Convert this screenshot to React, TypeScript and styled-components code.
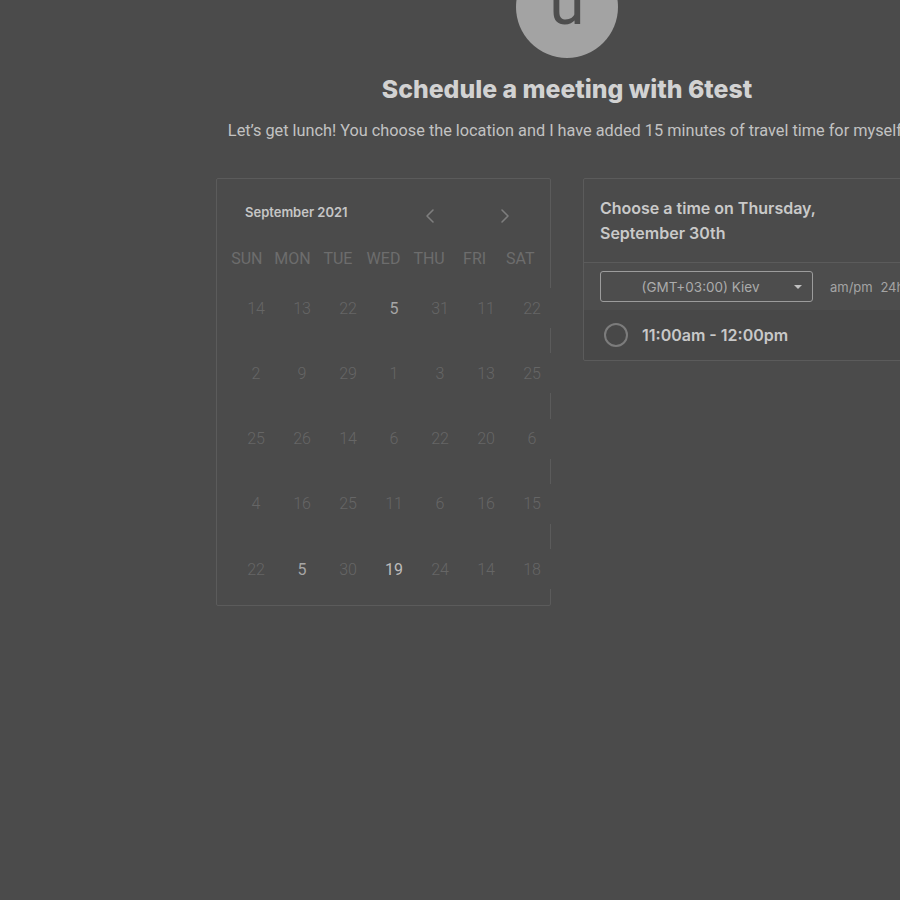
import React from "react";
import styled, { createGlobalStyle } from "styled-components";

const Global = createGlobalStyle`
  html, body { margin: 0; padding: 0; background: #4b4b4b; overflow: hidden; }
  body { font-family: Roboto, "Liberation Sans", sans-serif; }
  * { box-sizing: border-box; }
`;

const Page = styled.div`
  width: 1134px;
  display: flex;
  flex-direction: column;
  align-items: center;
`;

const Avatar = styled.div`
  width: 102px;
  height: 102px;
  margin-top: -44px;
  border-radius: 50%;
  background: #a3a3a3;
  color: #4e4e4e;
  font-family: Roboto, sans-serif;
  font-size: 64px;
  line-height: 1;
  display: flex;
  align-items: center;
  justify-content: center;
  padding-bottom: 8px;
`;

const Title = styled.h1`
  margin: 16px 0 0;
  font-family: Inter, sans-serif;
  font-weight: 800;
  font-size: 24.8px;
  line-height: 30px;
  color: #d2d2d2;
`;

const Subtitle = styled.p`
  margin: 17px 0 0;
  font-family: Roboto, sans-serif;
  font-size: 16.3px;
  line-height: 20px;
  color: #c2c2c2;
  white-space: nowrap;
`;

const Columns = styled.div`
  margin-top: 37px;
  display: flex;
  gap: 32px;
  align-items: flex-start;
`;

const CalendarCard = styled.div`
  width: 335px;
  height: 428px;
  border: 1px solid #5b5b5b;
  border-radius: 2px;
  display: flex;
  flex-direction: column;
`;

const CalHeader = styled.div`
  height: 65px;
  display: flex;
  align-items: center;
  padding: 0 33px 0 28px;
`;

const MonthLabel = styled.div`
  font-family: Inter, sans-serif;
  font-weight: 600;
  font-size: 13px;
  color: #c6c6c6;
`;

const NavGroup = styled.div`
  margin-left: auto;
  display: flex;
  gap: 51px;
  margin-top: 8px;
`;

const NavButton = styled.button`
  width: 24px;
  height: 24px;
  padding: 0;
  border: none;
  background: transparent;
  display: flex;
  align-items: center;
  justify-content: center;
  color: #7e7e7e;
`;

const DayNames = styled.div`
  margin: 5px 0 0 7px;
  width: 319px;
  display: grid;
  grid-template-columns: repeat(7, 1fr);
`;

const DayName = styled.div`
  text-align: center;
  font-family: Roboto, sans-serif;
  font-size: 16px;
  line-height: 20px;
  color: #6d6d6d;
`;

const DayGrid = styled.div`
  margin: 19px 0 0 16px;
  width: 322px;
  display: grid;
  grid-template-columns: repeat(7, 1fr);
  grid-auto-rows: 40px;
  row-gap: 25.3px;
`;

const DayCell = styled.div<{ $tone: "dim" | "mid" | "bright" }>`
  background: #4b4b4b;
  display: flex;
  align-items: center;
  justify-content: center;
  font-family: Roboto, sans-serif;
  font-weight: ${(p) => (p.$tone === "dim" ? 300 : 400)};
  font-size: 16px;
  color: ${(p) =>
    p.$tone === "dim" ? "#666666" : p.$tone === "mid" ? "#a6a6a6" : "#bcbcbc"};
`;

const TimePanel = styled.div`
  width: 335px;
  border: 1px solid #5b5b5b;
  border-radius: 2px;
`;

const PanelHeader = styled.div`
  padding: 17px 16px 16px;
  font-family: Inter, sans-serif;
  font-weight: 600;
  font-size: 16px;
  line-height: 25px;
  color: #c9c9c9;
  border-bottom: 1px solid #5b5b5b;
`;

const ZoneRow = styled.div`
  height: 47px;
  display: flex;
  align-items: center;
  padding: 0 16px;
  gap: 17px;
  background: #4d4d4d;
  overflow: hidden;
`;

const ZoneSelect = styled.div`
  flex: 0 0 213px;
  height: 31px;
  border: 1px solid #9c9c9c;
  border-radius: 3px;
  display: flex;
  align-items: center;
  padding: 0 10px 0 16px;
  font-family: Inter, sans-serif;
  font-size: 13.5px;
  color: #ababab;
`;

const ZoneText = styled.span`
  flex: 1;
  text-align: center;
  padding-right: 10px;
`;

const Caret = styled.span`
  width: 0;
  height: 0;
  border-left: 4px solid transparent;
  border-right: 4px solid transparent;
  border-top: 4px solid #c0c0c0;
`;

const FormatToggle = styled.div`
  flex: 0 0 auto;
  font-family: Inter, sans-serif;
  font-size: 13px;
  color: #a4a4a4;
  white-space: nowrap;
  word-spacing: 4px;
`;

const SlotRow = styled.div`
  height: 50px;
  display: flex;
  align-items: center;
  padding-left: 20px;
  gap: 14px;
  background: #484848;
  border-radius: 0 0 2px 2px;
`;

const Radio = styled.span`
  width: 24px;
  height: 24px;
  border-radius: 50%;
  border: 2px solid #7c7c7c;
`;

const SlotLabel = styled.span`
  font-family: Inter, sans-serif;
  font-weight: 600;
  font-size: 16px;
  color: #c8c8c8;
`;

type Tone = "dim" | "mid" | "bright";
const rows: [string, Tone][][] = [
  [["14", "dim"], ["13", "dim"], ["22", "dim"], ["5", "mid"], ["31", "dim"], ["11", "dim"], ["22", "dim"]],
  [["2", "dim"], ["9", "dim"], ["29", "dim"], ["1", "dim"], ["3", "dim"], ["13", "dim"], ["25", "dim"]],
  [["25", "dim"], ["26", "dim"], ["14", "dim"], ["6", "dim"], ["22", "dim"], ["20", "dim"], ["6", "dim"]],
  [["4", "dim"], ["16", "dim"], ["25", "dim"], ["11", "dim"], ["6", "dim"], ["16", "dim"], ["15", "dim"]],
  [["22", "dim"], ["5", "mid"], ["30", "dim"], ["19", "bright"], ["24", "dim"], ["14", "dim"], ["18", "dim"]],
];

const days = ["SUN", "MON", "TUE", "WED", "THU", "FRI", "SAT"];

const Chevron = ({ dir }: { dir: "left" | "right" }) => (
  <svg width="10" height="16" viewBox="0 0 10 16" fill="none">
    <path
      d={dir === "left" ? "M8 2 L2 8 L8 14" : "M2 2 L8 8 L2 14"}
      stroke="currentColor"
      strokeWidth="1.6"
      strokeLinecap="round"
      strokeLinejoin="round"
    />
  </svg>
);

export default function App() {
  return (
    <>
      <Global />
      <Page>
        <Avatar>u</Avatar>
        <Title>Schedule a meeting with 6test</Title>
        <Subtitle>
          Let’s get lunch! You choose the location and I have added 15 minutes of travel time for myself.
        </Subtitle>
        <Columns>
          <CalendarCard>
            <CalHeader>
              <MonthLabel>September 2021</MonthLabel>
              <NavGroup>
                <NavButton aria-label="Previous month">
                  <Chevron dir="left" />
                </NavButton>
                <NavButton aria-label="Next month">
                  <Chevron dir="right" />
                </NavButton>
              </NavGroup>
            </CalHeader>
            <DayNames>
              {days.map((d) => (
                <DayName key={d}>{d}</DayName>
              ))}
            </DayNames>
            <DayGrid>
              {rows.flat().map(([n, tone], i) => (
                <DayCell key={i} $tone={tone}>
                  {n}
                </DayCell>
              ))}
            </DayGrid>
          </CalendarCard>
          <TimePanel>
            <PanelHeader>
              Choose a time on Thursday,
              <br />
              September 30th
            </PanelHeader>
            <ZoneRow>
              <ZoneSelect>
                <ZoneText>(GMT+03:00) Kiev</ZoneText>
                <Caret />
              </ZoneSelect>
              <FormatToggle>am/pm 24h</FormatToggle>
            </ZoneRow>
            <SlotRow>
              <Radio />
              <SlotLabel>11:00am - 12:00pm</SlotLabel>
            </SlotRow>
          </TimePanel>
        </Columns>
      </Page>
    </>
  );
}
